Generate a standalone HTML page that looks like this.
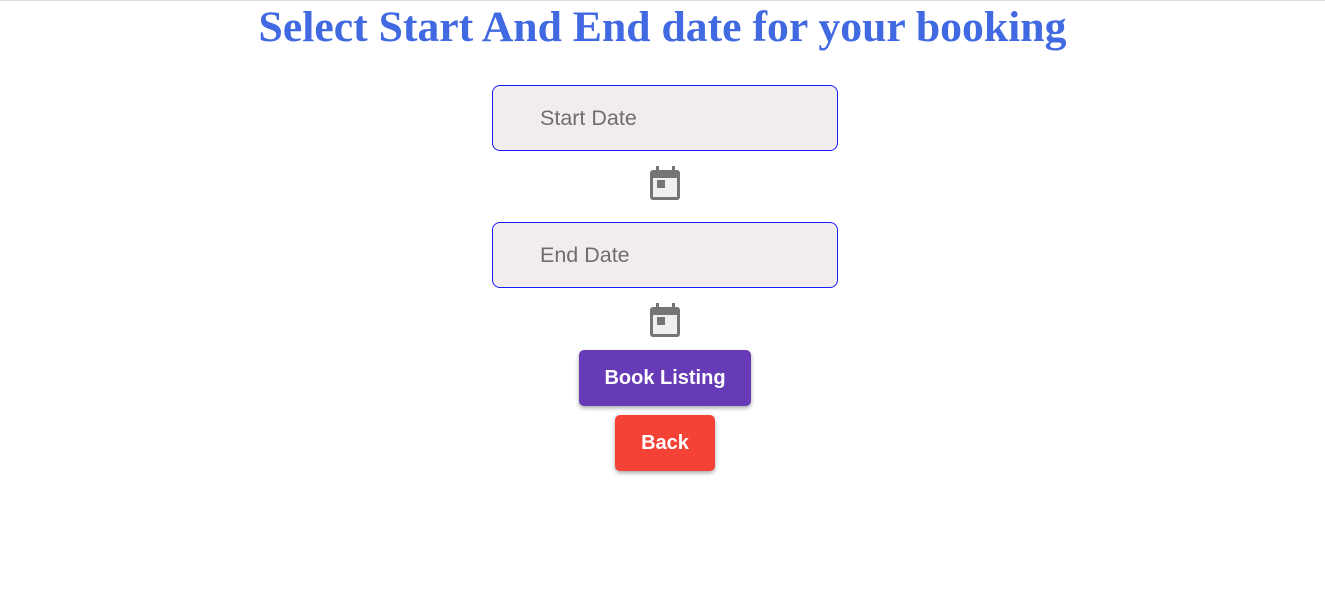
<!DOCTYPE html>
<html><head><meta charset="utf-8"><style>
html,body{margin:0;padding:0;background:#fff;width:1325px;height:597px;overflow:hidden;position:relative}
.topline{position:absolute;left:0;top:0;width:1325px;height:1px;background:#ddd}
h1{position:absolute;left:0;width:1325px;top:2px;margin:0;text-align:center;font:bold 43.7px/50px "Liberation Serif",serif;color:#4169e1}
.field{position:absolute;left:492px;width:346px;height:66px;border:1px solid #1a1aff;border-radius:8px;background:#f2eded;box-sizing:border-box}
.field span{position:absolute;left:47px;top:20px;font:21.5px/24px "Liberation Sans",sans-serif;color:#6e6e6e}
svg.cal{position:absolute;left:650px;width:30px;height:34px}
.btn{position:absolute;color:#fff;font:bold 20px/56px "Liberation Sans",sans-serif;text-align:center;border-radius:5px;box-shadow:0 2px 4px rgba(0,0,0,.35)}
</style></head><body>
<div class="topline"></div>
<h1>Select Start And End date for your booking</h1>
<div class="field" style="top:85px"><span>Start Date</span></div>
<svg class="cal" style="top:166px" viewBox="0 0 30 34"><rect x="6" y="0" width="3" height="6" fill="#757575"/><rect x="22" y="0" width="3" height="6" fill="#757575"/><rect x="0" y="4" width="30" height="30" rx="3" fill="#757575"/><rect x="3" y="12" width="24" height="19" fill="#f0f0f0"/><rect x="7" y="14" width="8" height="8" fill="#757575"/></svg>
<div class="field" style="top:222px"><span>End Date</span></div>
<svg class="cal" style="top:303px" viewBox="0 0 30 34"><rect x="6" y="0" width="3" height="6" fill="#757575"/><rect x="22" y="0" width="3" height="6" fill="#757575"/><rect x="0" y="4" width="30" height="30" rx="3" fill="#757575"/><rect x="3" y="12" width="24" height="19" fill="#f0f0f0"/><rect x="7" y="14" width="8" height="8" fill="#757575"/></svg>
<div class="btn" style="left:579px;top:350px;width:172px;height:56px;background:#673ab7">Book Listing</div>
<div class="btn" style="left:615px;top:415px;width:100px;height:56px;background:#f44336">Back</div>
</body></html>
